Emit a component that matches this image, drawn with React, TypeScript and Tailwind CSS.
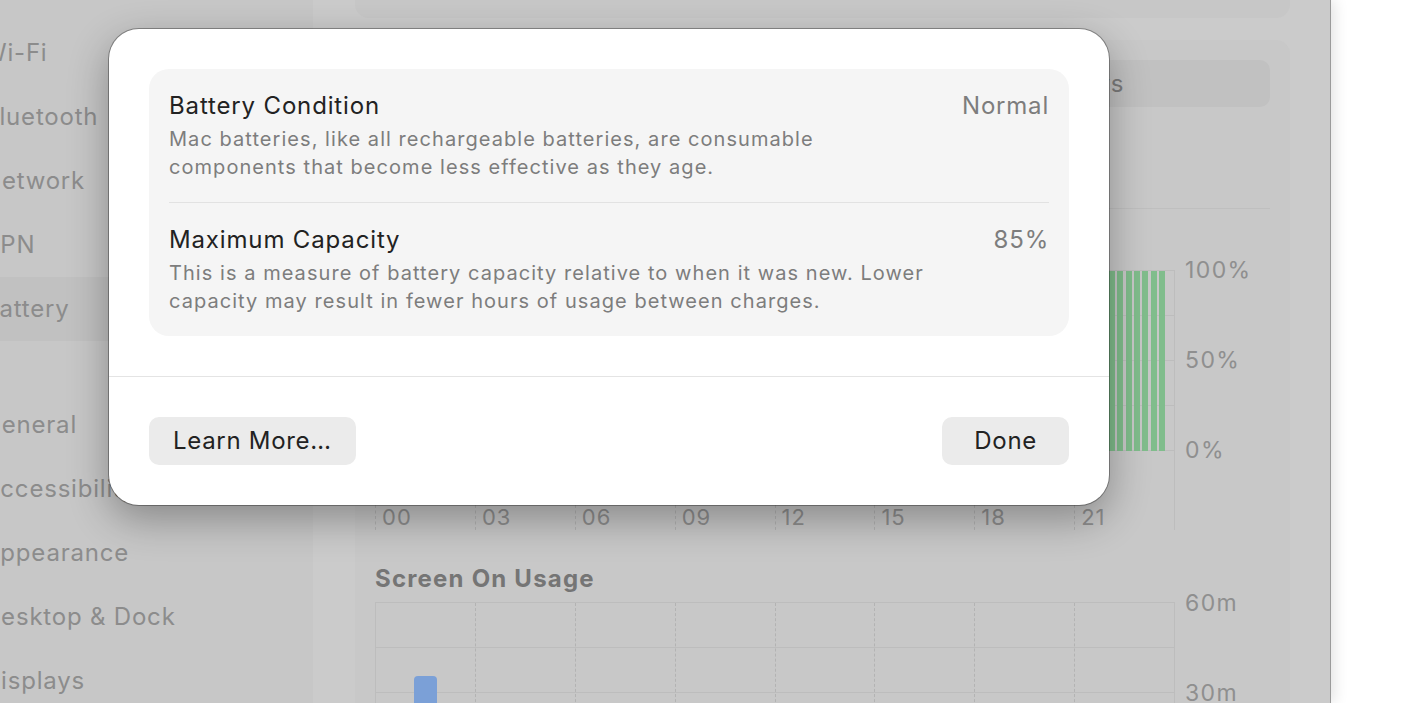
import React from "react";

const sidebarTop = ["Wi-Fi", "Bluetooth", "Network", "VPN", "Battery"];
const sidebarBottom = ["General", "Accessibility", "Appearance", "Desktop & Dock", "Displays"];

// battery level, one value per 15 min slot
const levels: number[] = Array.from({ length: 96 }, (_, i) => {
  if (i >= 95) return 0;
  if (i >= 60) return 100;
  if (i >= 40) return 60 + (i - 40) * 2;
  return 90 - i;
});

const hours = ["00", "03", "06", "09", "12", "15", "18", "21"];

function SidebarItem({ label, selected }: { label: string; selected?: boolean }) {
  return (
    <div
      className={`-ml-4 flex h-16 items-center rounded-[10px] pl-4 ${selected ? "bg-[#c1c1c1]" : ""}`}
    >
      <span className="-ml-[17px] whitespace-nowrap text-[24px] tracking-[0.8px] text-[#8c8c8c]">
        {label}
      </span>
    </div>
  );
}

function GridLines({ rows }: { rows: number }) {
  return (
    <div className="pointer-events-none absolute inset-0 flex flex-col">
      {Array.from({ length: rows }, (_, i) => (
        <div key={i} className="flex-1 border-b border-[#bdbdbd]" />
      ))}
    </div>
  );
}

function DetailRow({
  title,
  value,
  lines,
}: {
  title: string;
  value: string;
  lines: string[];
}) {
  return (
    <div className="flex justify-between px-5 py-[21px]">
      <div>
        <div className="text-[24px] leading-[32px] tracking-[0.85px] text-[#222222]">{title}</div>
        <div className="mt-[3px] text-[20px] leading-[28px] tracking-[1.05px] text-[#7d7d7d]">
          {lines.map((l) => (
            <div key={l} className="whitespace-nowrap">
              {l}
            </div>
          ))}
        </div>
      </div>
      <div className="text-[24px] leading-[32px] tracking-[0.8px] text-[#7d7d7d]">{value}</div>
    </div>
  );
}

export default function App() {
  return (
    <div className="relative h-[703px] w-[1419px] overflow-hidden bg-white font-['Inter','Noto_Sans',sans-serif]">
      {/* settings window, dimmed behind the sheet */}
      <div className="flex h-full w-[1331px] border-r border-[#9a9a9a] shadow-[3px_0_14px_rgba(0,0,0,0.12)]">
        <aside className="w-[313px] shrink-0 bg-[#c7c7c7] pt-[21px] pr-4">
          {sidebarTop.map((s) => (
            <SidebarItem key={s} label={s} selected={s === "Battery"} />
          ))}
          <div className="h-[52px]" />
          {sidebarBottom.map((s) => (
            <SidebarItem key={s} label={s} />
          ))}
        </aside>

        <main className="flex-1 overflow-hidden bg-[#cbcbcb] pl-[42px] pr-[40px]">
          <div className="-mt-[40px] h-[58px] rounded-[14px] bg-[#c7c7c7]" />

          <div className="mt-[22px] rounded-[14px] bg-[#c8c8c8] px-5 pt-5">
            <div className="grid h-[47px] grid-cols-2 rounded-[10px] bg-[#c1c1c1] text-[24px] tracking-[0.8px] text-[#7b7b7b]">
              <div className="m-[3px] rounded-[8px] bg-[#cfcfcf]" />
              <div className="flex items-center justify-center pl-[4px]">Last 10 Days</div>
            </div>

            <div className="h-[101px]" />
            <div className="h-px bg-[#bfbfbf]" />

            {/* Battery Level */}
            <div className="h-[61px]" />
            <div className="flex">
              <div className="w-[800px]">
                <div className="relative h-[181px] border-t border-r border-[#bdbdbd]">
                  <GridLines rows={4} />
                  <div className="relative flex h-[180px] items-end">
                    {levels.map((v, i) => (
                      <div key={i} className="flex h-full flex-1 items-end justify-center">
                        <div className="w-[6px] bg-[#80bd8c]" style={{ height: `${v}%` }} />
                      </div>
                    ))}
                  </div>
                </div>
                <div className="h-[54px] border-r border-[#bdbdbd]" />
                <div className="flex h-[25px] border-r border-[#bdbdbd]">
                  {hours.map((h) => (
                    <div
                      key={h}
                      className="flex w-[100px] items-center border-l border-dashed border-[#b3b3b3] pl-[6px] text-[22px] leading-[25px] tracking-[1px] text-[#8f8f8f]"
                    >
                      {h}
                    </div>
                  ))}
                </div>
              </div>
              <div className="-mt-[14px] ml-[10px] flex flex-col text-[23px] leading-[28px] tracking-[1.4px] text-[#8f8f8f]">
                <div>100%</div>
                <div className="h-[62px]" />
                <div>50%</div>
                <div className="h-[62px]" />
                <div>0%</div>
              </div>
            </div>

            {/* Screen On Usage */}
            <div className="mt-[33px] mb-[7px] text-[24px] font-bold leading-[32px] tracking-[1.2px] text-[#757575]">
              Screen On Usage
            </div>
            <div className="flex">
              <div className="relative h-[181px] w-[800px] border-t border-r border-l border-[#bdbdbd]">
                <GridLines rows={4} />
                <div className="pointer-events-none absolute inset-0 flex">
                  {Array.from({ length: 8 }, (_, i) => (
                    <div
                      key={i}
                      className={`flex-1 ${i > 0 ? "border-l border-dashed border-[#b3b3b3]" : ""}`}
                    />
                  ))}
                </div>
                <div className="relative flex h-[180px] items-end">
                  {Array.from({ length: 24 }, (_, i) => (
                    <div key={i} className="flex h-full flex-1 items-end justify-center">
                      {i === 1 && (
                        <div className="h-[107px] w-[23px] rounded-t-[4px] bg-[#7ba0d7]" />
                      )}
                    </div>
                  ))}
                </div>
              </div>
              <div className="-mt-[13px] ml-[10px] flex flex-col text-[23px] leading-[28px] tracking-[1.4px] text-[#8f8f8f]">
                <div>60m</div>
                <div className="h-[62px]" />
                <div>30m</div>
              </div>
            </div>
            <div className="h-10" />
          </div>
        </main>
      </div>

      {/* battery health sheet */}
      <div className="absolute left-[109px] top-[29px] w-[1000px] rounded-[30px] bg-white shadow-[0_0_0_1px_rgba(0,0,0,0.32),0_14px_40px_rgba(0,0,0,0.32)]">
        <div className="p-10">
          <div className="rounded-[20px] bg-[#f5f5f5]">
            <DetailRow
              title="Battery Condition"
              value="Normal"
              lines={[
                "Mac batteries, like all rechargeable batteries, are consumable",
                "components that become less effective as they age.",
              ]}
            />
            <div className="mx-5 h-px bg-[#e2e2e2]" />
            <DetailRow
              title="Maximum Capacity"
              value="85%"
              lines={[
                "This is a measure of battery capacity relative to when it was new. Lower",
                "capacity may result in fewer hours of usage between charges.",
              ]}
            />
          </div>
        </div>
        <div className="h-px bg-[#e4e4e4]" />
        <div className="flex justify-between p-10">
          <button className="h-12 rounded-[10px] bg-[#ebebeb] px-6 text-[24px] tracking-[0.7px] text-[#222222]">
            Learn More…
          </button>
          <button className="h-12 rounded-[10px] bg-[#ebebeb] px-8 text-[24px] tracking-[0.7px] text-[#222222]">
            Done
          </button>
        </div>
      </div>
    </div>
  );
}
